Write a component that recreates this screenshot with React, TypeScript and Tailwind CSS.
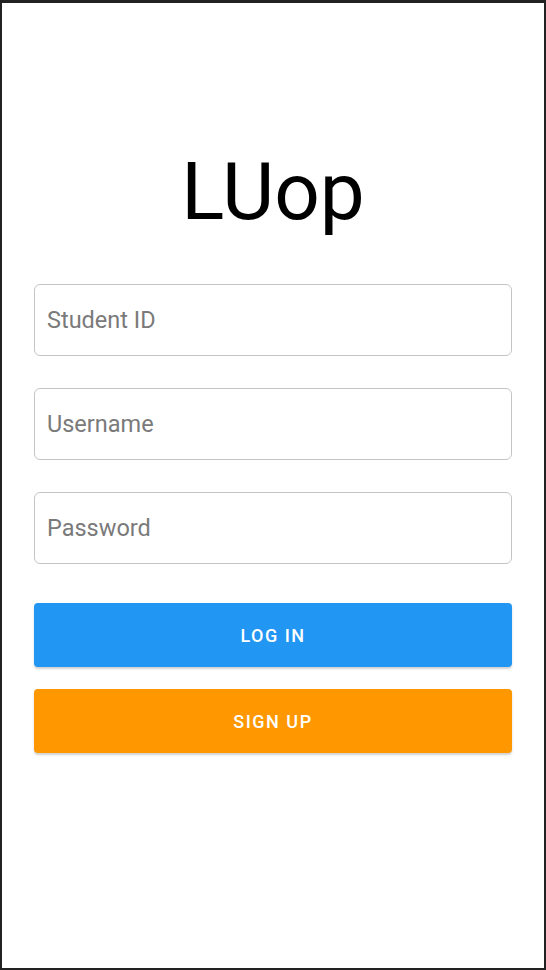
import { useState } from 'react';

export default function App() {
  const [studentId, setStudentId] = useState('');
  const [username, setUsername] = useState('');
  const [password, setPassword] = useState('');

  const fields = [
    { placeholder: 'Student ID', value: studentId, onChange: setStudentId, type: 'text' },
    { placeholder: 'Username', value: username, onChange: setUsername, type: 'text' },
    { placeholder: 'Password', value: password, onChange: setPassword, type: 'password' },
  ];

  return (
    <div
      className="box-border flex h-[970px] w-[546px] flex-col border-x-2 border-t-[3px] border-b-2 border-[#222222] bg-white px-8"
      style={{ fontFamily: 'Roboto, "Noto Sans", sans-serif' }}
    >
      <h1 className="mt-[149px] text-center text-[80px] leading-[80px] font-normal text-black">LUop</h1>

      <div className="mt-[52px] flex flex-col gap-8">
        {fields.map((field) => (
          <input
            key={field.placeholder}
            type={field.type}
            value={field.value}
            onChange={(e) => field.onChange(e.target.value)}
            placeholder={field.placeholder}
            className="h-[72px] w-full rounded-md border border-[#c4c4c4] px-3 text-[23.5px] text-black outline-none placeholder:text-[#7a7a7a]"
          />
        ))}
      </div>

      <div className="mt-[39px] flex flex-col gap-[22px]">
        <button className="h-16 w-full rounded bg-[#2196f3] text-[18px] font-medium tracking-[1.5px] text-white shadow-[0_2px_2px_rgba(0,0,0,0.18)]">
          LOG IN
        </button>
        <button className="h-16 w-full rounded bg-[#ff9800] text-[18px] font-medium tracking-[1.5px] text-white shadow-[0_2px_2px_rgba(0,0,0,0.18)]">
          SIGN UP
        </button>
      </div>
    </div>
  );
}
